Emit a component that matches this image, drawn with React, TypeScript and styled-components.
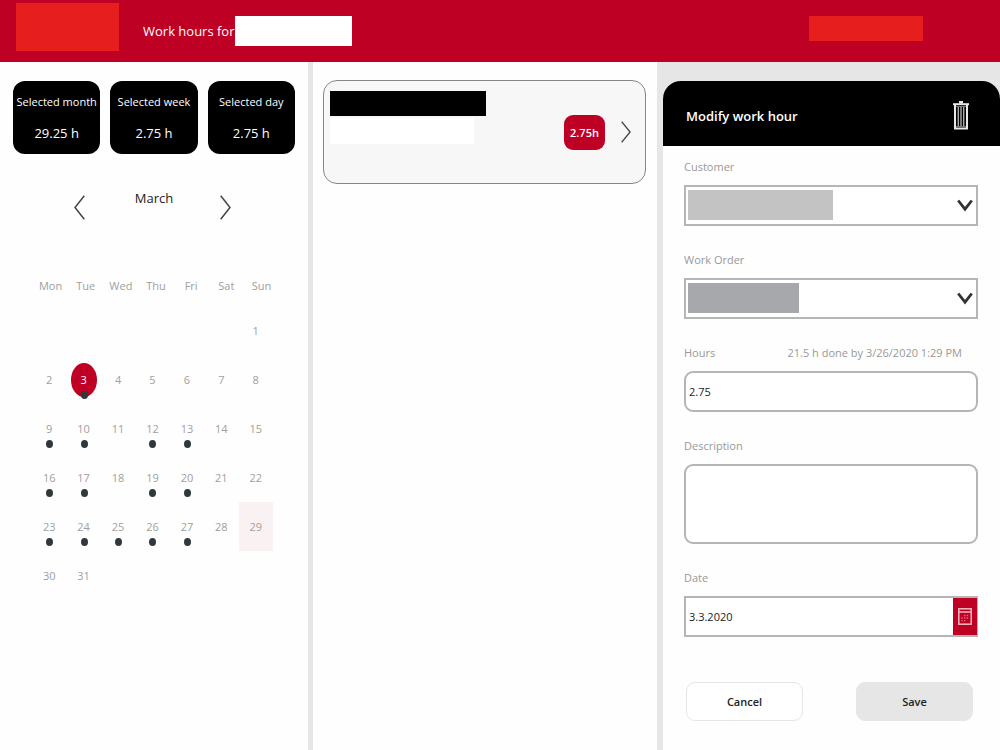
import React from "react";
import styled, { createGlobalStyle } from "styled-components";

const GlobalStyle = createGlobalStyle`
  *, *::before, *::after { box-sizing: border-box; }
  html, body, #root { min-height: 100vh; }
  body { margin: 0; background: #fefefe; color: #222; font-family: "Open Sans", "Noto Sans", sans-serif; }
  button, input, textarea, select { font: inherit; color: inherit; }
  h1, h2, p { margin: 0; font-weight: 400; }
`;

const Page = styled.div`
  min-height: 100vh;
  display: flex;
  flex-direction: column;
`;

const TopBar = styled.header`
  height: 62px;
  padding: 0 77px 0 16px;
  display: flex;
  align-items: flex-start;
  background: #be0025;
`;

const Block = styled.div<{ $width: number; $height: number; $color: string }>`
  flex: none;
  width: ${(p) => p.$width}px;
  height: ${(p) => p.$height}px;
  background: ${(p) => p.$color};
`;

const Brand = styled.div`
  padding-top: 3px;
`;

const PageTitle = styled.h1`
  display: flex;
  align-items: center;
  margin: 16px auto 0 24px;
  font-size: 13px;
  line-height: 30px;
  color: #fff;
  white-space: nowrap;

  span { width: 92px; }
`;

const Account = styled.div`
  padding-top: 16px;
`;

const Columns = styled.main`
  flex: 1;
  display: grid;
  grid-template-columns: minmax(0, 313fr) minmax(0, 344fr) minmax(0, 343fr);
`;

const CalendarColumn = styled.section`
  border-right: 5px solid #e6e6e6;
  padding-top: 19px;
`;

const Stats = styled.div`
  display: grid;
  grid-template-columns: repeat(3, minmax(0, 1fr));
  gap: 10px;
  padding: 0 13px;
`;

const Stat = styled.div`
  height: 73px;
  padding-top: 12px;
  border-radius: 12px;
  background: #000;
  color: #fff;
  text-align: center;
  white-space: nowrap;
`;

const StatLabel = styled.p`
  font-size: 11px;
  line-height: 18px;
`;

const StatValue = styled.p`
  margin-top: 10px;
  font-size: 13px;
  line-height: 24px;
`;

const MonthNav = styled.div`
  display: flex;
  justify-content: center;
  gap: 40px;
  margin: 34px 0 56px;
  padding-right: 4px;
`;

const MonthName = styled.h2`
  width: 55px;
  padding-left: 4px;
  font-size: 13px;
  line-height: 20px;
  text-align: center;
`;

const IconButton = styled.button`
  display: flex;
  padding: 0;
  border: 0;
  background: none;
  cursor: pointer;
`;

const NavButton = styled(IconButton)`
  margin-top: 7px;
`;

const Weekdays = styled.div`
  display: grid;
  grid-template-columns: repeat(7, 1fr);
  padding: 0 29px 0 33px;
  font-size: 11px;
  line-height: 20px;
  color: #a0a0a0;
  text-align: center;
`;

const Days = styled.div`
  display: grid;
  grid-template-columns: repeat(7, 1fr);
  grid-auto-rows: 49px;
  margin-top: 10px;
  padding: 0 35px 0 32px;
`;

const Day = styled.button<{ $today: boolean; $selected: boolean; $column: number }>`
  grid-column: ${(p) => p.$column};
  display: grid;
  place-items: center;
  padding: 0;
  border: 0;
  background: ${(p) => (p.$today ? "#faf1f2" : "none")};
  color: ${(p) => (p.$selected ? "#fff" : "#a0a0a0")};
  font-size: 11px;
  position: relative;
  cursor: pointer;

  span {
    display: grid;
    place-items: center;
    width: 26px;
    height: 34px;
    border-radius: 50%;
    background: ${(p) => (p.$selected ? "#be0025" : "none")};
  }
`;

const Dot = styled.i`
  position: absolute;
  left: calc(50% - 3px);
  bottom: 5px;
  width: 7px;
  height: 8px;
  border-radius: 50%;
  background: #30383c;
`;

const EntriesColumn = styled.section`
  padding: 18px 11px 0 10px;
`;

const Entry = styled.article`
  height: 104px;
  display: flex;
  align-items: center;
  padding: 0 14px 0 6px;
  border: 1px solid #868686;
  border-radius: 14px;
  background: #f7f7f7;
`;

const EntryText = styled.div`
  align-self: flex-start;
  display: flex;
  flex-direction: column;
  gap: 2px;
  margin: 10px auto 0 0;
`;

const HoursBadge = styled.span`
  width: 41px;
  height: 35px;
  margin-right: 16px;
  border-radius: 9px;
  background: #be0025;
  color: #fff;
  font-size: 11px;
  font-weight: 600;
  line-height: 35px;
  text-align: center;
`;

const EditColumn = styled.section`
  padding: 19px 0 0 6px;
  background: #e6e6e6;
  display: flex;
  flex-direction: column;
`;

const EditHeader = styled.header`
  height: 65px;
  display: flex;
  align-items: center;
  justify-content: space-between;
  padding: 4px 31px 0 23px;
  border-radius: 18px 18px 0 0;
  background: #000;
  color: #fff;

  h2 { font-size: 13px; font-weight: 600; line-height: 20px; }
`;

const Form = styled.form`
  flex: 1;
  padding: 12px 22px 28px 21px;
  background: #fefefe;
  font-size: 11px;
`;

const Field = styled.div`
  margin-bottom: 25px;
`;

const LabelRow = styled.div`
  display: flex;
  justify-content: space-between;
  padding-right: 16px;
  margin-bottom: 9px;
  line-height: 18px;
  color: #999;
`;

const Control = styled.div`
  position: relative;
  display: flex;
  height: 41px;
`;

const Select = styled.select`
  appearance: none;
  width: 100%;
  border: 2px solid #b5b5b5;
  border-radius: 0;
  background: #fff;
`;

const ChosenValue = styled.div`
  position: absolute;
  left: 4px;
  top: 5px;
  pointer-events: none;
`;

const SelectArrow = styled.svg`
  position: absolute;
  right: 5px;
  top: 14px;
  pointer-events: none;
`;

const TextInput = styled.input<{ $square?: boolean }>`
  width: 100%;
  min-width: 0;
  padding: 0 3px;
  border: 2px solid #b5b5b5;
  border-radius: ${(p) => (p.$square ? 0 : 9)}px;
  background: #fff;
`;

const TextArea = styled.textarea`
  display: block;
  width: 100%;
  height: 80px;
  padding: 8px 3px;
  border: 2px solid #b5b5b5;
  border-radius: 9px;
  background: #fff;
  resize: none;
`;

const DateBox = styled(Control)`
  border: 2px solid #b5b5b5;
  border-right-width: 1px;

  input { border: 0; }
`;

const DateButton = styled(IconButton)`
  flex: none;
  width: 24px;
  align-items: center;
  justify-content: center;
  background: #be0025;
`;

const Actions = styled.div`
  display: flex;
  justify-content: space-between;
  margin-top: 45px;
  padding: 0 5px 0 2px;
`;

const ActionButton = styled.button<{ $filled?: boolean }>`
  width: 117px;
  height: 39px;
  border: 1px solid #e6e6e6;
  border-radius: 9px;
  background: ${(p) => (p.$filled ? "#e6e6e6" : "#fff")};
  font-weight: 600;
  cursor: pointer;
`;

const Chevron = ({ left, width = 11, height = 25 }: { left?: boolean; width?: number; height?: number }) => (
  <svg width={width} height={height} viewBox="0 0 11 25" preserveAspectRatio="none" fill="none" stroke="#444" strokeWidth="1.5" aria-hidden="true">
    <path d={left ? "M10.3.7 1 12.5l9.3 11.8" : "M.7.7 10 12.5.7 24.3"} />
  </svg>
);

const TrashIcon = () => (
  <svg width="16" height="30" viewBox="0 0 16 30" fill="none" stroke="#e8e8e8" aria-hidden="true">
    <path d="M0 3.2h16" strokeWidth="2" />
    <path d="M6 1.2h4" strokeWidth="2.4" />
    <path d="M2 4v23.5h12V4" strokeWidth="2" />
    <path d="M3 5.5h10M3 25.5h10" stroke="#777" />
    <path d="M5.3 6v19M8 6v19M10.7 6v19" stroke="#aaa" strokeWidth="1.4" />
  </svg>
);

const CalendarIcon = () => (
  <svg width="14" height="17" viewBox="0 0 14 17" fill="none" stroke="#f5b8c2" aria-hidden="true">
    <rect x=".8" y=".8" width="12.4" height="15.4" strokeWidth="1.5" />
    <path d="M1 4h12" strokeWidth="1.5" />
    <path d="M6 7.5h1.5M8.7 7.5h1.5M3.3 10h1.5M6 10h1.5M8.7 10h1.5M3.3 12.6h1.5M6 12.6h1.5" stroke="#e2637c" strokeWidth="1.3" />
  </svg>
);

const Arrow = () => (
  <SelectArrow width="16" height="14" viewBox="0 0 16 14" fill="none" stroke="#333" strokeWidth="2.8" aria-hidden="true">
    <path d="M1.2 1.5 8 10.2l6.8-8.7" />
  </SelectArrow>
);

const stats = [
  ["Selected month", "29.25 h"],
  ["Selected week", "2.75 h"],
  ["Selected day", "2.75 h"],
];
const weekdays = ["Mon", "Tue", "Wed", "Thu", "Fri", "Sat", "Sun"];
const days = Array.from({ length: 31 }, (_, i) => i + 1);
const workedDays = [3, 9, 10, 12, 13, 16, 17, 19, 20, 23, 24, 25, 26, 27];

export default function App() {
  return (
    <Page>
      <GlobalStyle />
      <TopBar>
        <Brand><Block $width={103} $height={48} $color="#e71e1e" /></Brand>
        <PageTitle>
          <span>Work hours for</span>
          <Block $width={117} $height={30} $color="#fff" />
        </PageTitle>
        <Account><Block $width={114} $height={25} $color="#e71e1e" /></Account>
      </TopBar>
      <Columns>
        <CalendarColumn>
          <Stats>
            {stats.map(([label, value]) => (
              <Stat key={label}>
                <StatLabel>{label}</StatLabel>
                <StatValue>{value}</StatValue>
              </Stat>
            ))}
          </Stats>
          <MonthNav>
            <NavButton type="button" aria-label="Previous month"><Chevron left /></NavButton>
            <MonthName>March</MonthName>
            <NavButton type="button" aria-label="Next month"><Chevron /></NavButton>
          </MonthNav>
          <Weekdays>
            {weekdays.map((name) => <span key={name}>{name}</span>)}
          </Weekdays>
          <Days>
            {days.map((day) => (
              <Day key={day} type="button" $column={((day + 5) % 7) + 1} $selected={day === 3} $today={day === 29}>
                <span>{day}</span>
                {workedDays.includes(day) && <Dot />}
              </Day>
            ))}
          </Days>
        </CalendarColumn>
        <EntriesColumn>
          <Entry>
            <EntryText>
              <Block $width={156} $height={25} $color="#000" />
              <Block $width={144} $height={26} $color="#fff" />
            </EntryText>
            <HoursBadge>2.75h</HoursBadge>
            <IconButton type="button" aria-label="Open entry"><Chevron width={10} height={22} /></IconButton>
          </Entry>
        </EntriesColumn>
        <EditColumn>
          <EditHeader>
            <h2>Modify work hour</h2>
            <IconButton type="button" aria-label="Delete"><TrashIcon /></IconButton>
          </EditHeader>
          <Form>
            <Field>
              <LabelRow><label htmlFor="customer">Customer</label></LabelRow>
              <Control>
                <Select id="customer"><option /></Select>
                <ChosenValue><Block $width={145} $height={30} $color="#c3c3c3" /></ChosenValue>
                <Arrow />
              </Control>
            </Field>
            <Field>
              <LabelRow><label htmlFor="order">Work Order</label></LabelRow>
              <Control>
                <Select id="order"><option /></Select>
                <ChosenValue><Block $width={111} $height={30} $color="#a7a8ac" /></ChosenValue>
                <Arrow />
              </Control>
            </Field>
            <Field>
              <LabelRow>
                <label htmlFor="hours">Hours</label>
                <span>21.5 h done by 3/26/2020 1:29 PM</span>
              </LabelRow>
              <Control><TextInput id="hours" defaultValue="2.75" /></Control>
            </Field>
            <Field>
              <LabelRow><label htmlFor="description">Description</label></LabelRow>
              <TextArea id="description" />
            </Field>
            <Field>
              <LabelRow><label htmlFor="date">Date</label></LabelRow>
              <DateBox>
                <TextInput id="date" $square defaultValue="3.3.2020" />
                <DateButton type="button" aria-label="Pick a date"><CalendarIcon /></DateButton>
              </DateBox>
            </Field>
            <Actions>
              <ActionButton type="button">Cancel</ActionButton>
              <ActionButton type="button" $filled>Save</ActionButton>
            </Actions>
          </Form>
        </EditColumn>
      </Columns>
    </Page>
  );
}
